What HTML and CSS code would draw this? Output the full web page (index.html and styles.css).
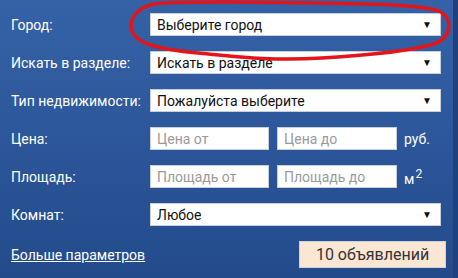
FILE: index.html
```html
<!DOCTYPE html>
<html lang="ru">
<head>
<meta charset="utf-8">
<link rel="stylesheet" href="styles.css">
</head>
<body>
<div class="panel">
  <form class="form">
    <div class="row">
      <label class="label">Город:</label>
      <div class="select"><span>Выберите город</span><span class="arrow">▼</span></div>
    </div>
    <div class="row">
      <label class="label">Искать в разделе:</label>
      <div class="select"><span>Искать в разделе</span><span class="arrow">▼</span></div>
    </div>
    <div class="row">
      <label class="label">Тип недвижимости:</label>
      <div class="select"><span>Пожалуйста выберите</span><span class="arrow">▼</span></div>
    </div>
    <div class="row">
      <label class="label">Цена:</label>
      <div class="input first">Цена от</div>
      <div class="input second">Цена до</div>
      <span class="unit">руб.</span>
    </div>
    <div class="row">
      <label class="label">Площадь:</label>
      <div class="input first">Площадь от</div>
      <div class="input second">Площадь до</div>
      <span class="unit">м<sup>2</sup></span>
    </div>
    <div class="row">
      <label class="label">Комнат:</label>
      <div class="select"><span>Любое</span><span class="arrow">▼</span></div>
    </div>
    <div class="bottom">
      <a class="more" href="#">Больше параметров</a>
      <div class="button">10 объявлений</div>
    </div>
  </form>
  <svg class="scribble" width="458" height="80" viewBox="0 0 458 80">
    <path d="M 154 4 C 137 8, 128 19, 132 31 C 136 43, 156 49, 198 53 C 240 57, 272 61, 322 58 C 372 55, 410 51, 434 44 C 452 37, 453 20, 441 12 C 424 3, 330 3, 228 2 C 190 2, 166 2, 154 4" fill="none" stroke="#e3151a" stroke-width="3.5" stroke-linecap="round"/>
  </svg>
</div>
</body>
</html>
```
FILE: styles.css
```css
html, body {
  margin: 0;
  padding: 0;
}
body {
  width: 458px;
  height: 278px;
  overflow: hidden;
  font-family: Roboto, "Liberation Sans", Arial, sans-serif;
}
.panel {
  position: relative;
  width: 453px;
  height: 278px;
  background: linear-gradient(#3562a7, #234b8c);
  border-right: 5px solid #1f427e;
}
.form {
  padding: 13px 0 0 11px;
  display: flex;
  flex-direction: column;
  gap: 15px;
}
.row {
  display: flex;
  align-items: center;
  height: 23px;
}
.label {
  width: 139px;
  flex: none;
  color: #fff;
  font-size: 14px;
}
.select {
  box-sizing: border-box;
  width: 291px;
  height: 23px;
  background: #fff;
  border: 1px solid #c9cfd8;
  display: flex;
  align-items: center;
  justify-content: space-between;
  padding: 0 8px 0 6px;
  font-size: 14px;
  color: #111;
}
.arrow {
  font-size: 10px;
  color: #111;
}
.input {
  box-sizing: border-box;
  height: 23px;
  background: #fff;
  border: 1px solid #c9cfd8;
  display: flex;
  align-items: center;
  padding-left: 6px;
  font-size: 14px;
  color: #9a9a9a;
}
.input.first {
  width: 119px;
}
.input.second {
  width: 120px;
  margin-left: 8px;
}
.unit {
  margin-left: 7px;
  color: #fff;
  font-size: 14px;
}
.unit sup {
  font-size: 12px;
  position: relative;
  top: 0;
  margin-left: 1px;
}
.bottom {
  display: flex;
  align-items: center;
  justify-content: space-between;
  width: 435px;
  height: 27px;
}
.more {
  color: #fff;
  font-size: 14px;
  text-decoration: underline;
}
.button {
  box-sizing: border-box;
  width: 147px;
  height: 27px;
  background: #fbe6d3;
  border: 1px solid #cdd3dc;
  display: flex;
  align-items: center;
  justify-content: center;
  font-size: 16px;
  color: #333;
}
.scribble {
  position: absolute;
  left: 0;
  top: 0;
}
```
